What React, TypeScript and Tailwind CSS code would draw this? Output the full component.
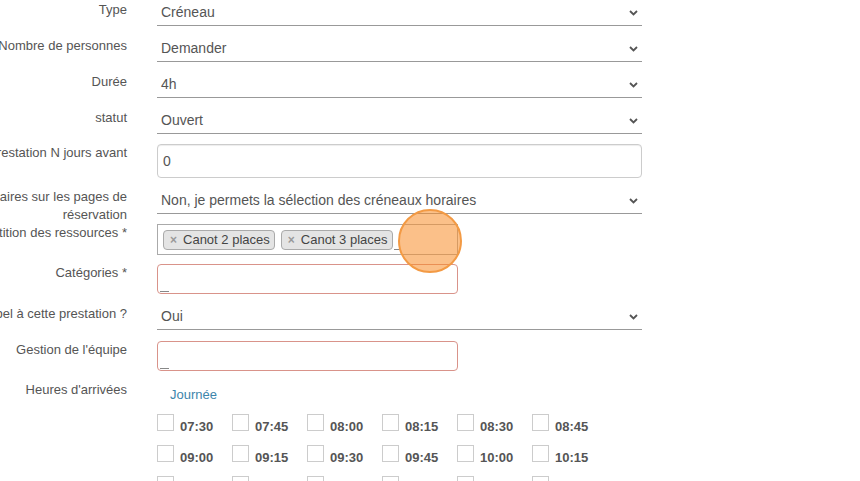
import type { ReactNode } from 'react'

const Chevron = () => (
  <svg width="9" height="6" viewBox="0 0 9 6" className="shrink-0">
    <path d="M1 1l3.5 3.5L8 1" fill="none" stroke="#555" strokeWidth="1.8" />
  </svg>
)

interface RowProps {
  label: ReactNode
  children: ReactNode
  className?: string
  labelClass?: string
}

const Row = ({ label, children, className = '', labelClass = '' }: RowProps) => (
  <div className={`flex items-start ${className}`}>
    <div className={`w-[300px] -ml-[143px] shrink-0 pr-[30px] text-right text-[13px] leading-[18px] text-[#555] ${labelClass}`}>
      {label}
    </div>
    <div className="flex-1 min-w-0">{children}</div>
  </div>
)

const Select = ({ value }: { value: string }) => (
  <div className="w-[485px] h-[26px] border-b border-[#999] flex items-center justify-between pl-[4px] pr-[4px] text-[14px] text-[#555]">
    <span>{value}</span>
    <Chevron />
  </div>
)

const Tag = ({ text }: { text: string }) => (
  <div className="h-[20px] flex items-center gap-[6px] pl-[6px] pr-[4px] bg-[#e4e4e4] border border-[#aaa] rounded-[4px] text-[13px] text-[#444]">
    <span className="text-[#999] font-bold text-[12px] leading-none">×</span>
    <span>Canot {text} places</span>
  </div>
)

const RedBox = () => (
  <div className="w-[301px] h-[30px] border border-[#d9938a] rounded-[4px] flex items-end pl-[2px] pb-[1px]">
    <span className="w-[9px] h-px bg-[#888]" />
  </div>
)

const times = [
  '07:30', '07:45', '08:00', '08:15', '08:30', '08:45',
  '09:00', '09:15', '09:30', '09:45', '10:00', '10:15',
  '10:30', '10:45', '11:00', '11:15', '11:30', '11:45',
]

export default function App() {
  return (
    <div className="w-[860px] h-[481px] overflow-hidden bg-white relative font-['Liberation_Sans',Arial,sans-serif]">
      <Row label="Type" labelClass="pt-[1px]" className="mb-[10px]">
        <Select value="Créneau" />
      </Row>
      <Row label="Nombre de personnes" labelClass="pt-[1px]" className="mb-[10px]">
        <Select value="Demander" />
      </Row>
      <Row label="Durée" labelClass="pt-[1px]" className="mb-[10px]">
        <Select value="4h" />
      </Row>
      <Row label="statut" labelClass="pt-[1px]" className="mb-[10px]">
        <Select value="Ouvert" />
      </Row>
      <Row label="Prestation N jours avant" className="mb-[10px]">
        <div className="w-[485px] h-[34px] border border-[#ccc] rounded-[4px] shadow-[inset_0_1px_1px_rgba(0,0,0,0.075)] flex items-center pl-[5px] text-[14px] text-[#555]">
          0
        </div>
      </Row>
      <Row
        label="Afficher les horaires sur les pages de réservation"
        labelClass="h-[26px]"
        className="mb-[10px] h-[26px]"
      >
        <Select value="Non, je permets la sélection des créneaux horaires" />
      </Row>
      <Row label="Répartition des ressources *" className="mb-[9px]">
        <div className="w-[301px] h-[31px] border border-[#aaa] flex items-center gap-[6px] pl-[5px]">
          <Tag text="2" />
          <Tag text="3" />
          <span className="w-[6px] h-px bg-[#888] self-end mb-[4px] -ml-[5px]" />
        </div>
      </Row>
      <Row label="Catégories *" className="mb-[10px]">
        <RedBox />
      </Row>
      <Row label="Appel à cette prestation ?" labelClass="pt-[1px]" className="mb-[11px]">
        <Select value="Oui" />
      </Row>
      <Row label="Gestion de l'équipe" className="mb-[10px]">
        <RedBox />
      </Row>
      <Row label="Heures d'arrivées">
        <div className="pt-[5px] pl-[13px] text-[13px] leading-[18px] text-[#3d85ab]">Journée</div>
        <div className="mt-[10px] flex flex-wrap w-[460px]">
          {times.map(t => (
            <div key={t} className="w-[75px] h-[31px] flex items-start gap-[6px]">
              <span className="w-[17px] h-[17px] border border-[#ccc] bg-white shrink-0" />
              <span className="mt-[4px] text-[13px] leading-[18px] font-bold text-[#555]">{t}</span>
            </div>
          ))}
        </div>
      </Row>

      {/* click indicator */}
      <div className="absolute left-[398px] top-[209px] w-[64px] h-[64px] rounded-full border-[2.5px] border-[#f39a44] bg-[rgba(247,140,40,0.55)]" />
    </div>
  )
}
